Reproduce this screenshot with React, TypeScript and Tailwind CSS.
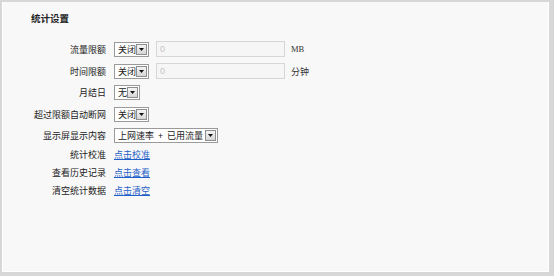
import React from 'react';

const FONT = { fontFamily: '"Noto Sans CJK SC", "Liberation Sans", sans-serif' };

function Select({ value, width }: { value: string; width: string }) {
  return (
    <div className={`flex h-[15px] items-center border border-[#9a9a9a] bg-white ${width}`}>
      <span className="flex-1 whitespace-pre pl-[3px] text-[9px] leading-none text-[#1a1a1a]">{value}</span>
      <span className="mr-[1px] flex h-[11px] w-[11px] items-center justify-center border border-[#8e8e8e] bg-gradient-to-b from-[#f4f4f4] to-[#d6d6d6]">
        <svg width="5" height="3" viewBox="0 0 5 3">
          <path d="M0 0h5L2.5 3z" fill="#111" />
        </svg>
      </span>
    </div>
  );
}

function DisabledInput() {
  return (
    <div className="flex h-[16px] w-[129px] items-center border border-[#d6d6d6] bg-[#f6f6f6] pl-[3px]">
      <span className="text-[9px] leading-none text-[#c4c4c4]" style={{ fontFamily: '"Liberation Sans", sans-serif' }}>
        0
      </span>
    </div>
  );
}

function Row({ label, height, children }: { label: string; height: string; children: React.ReactNode }) {
  return (
    <div className={`flex items-center ${height}`}>
      <div className="w-[103px] text-right text-[9px] leading-none text-[#222]">{label}</div>
      <div className="ml-[8px] flex items-center">{children}</div>
    </div>
  );
}

function LinkText({ text }: { text: string }) {
  return <a className="text-[9px] leading-none text-[#1f5fc8] underline underline-offset-1">{text}</a>;
}

export default function App() {
  return (
    <div className="h-[276px] w-[554px] bg-[#d7d7d7] pb-[4px] pl-[2px] pr-[5px] pt-[2px]" style={FONT}>
      <div className="h-full w-full border-b border-l border-r border-white bg-[#f8f8f8]">
        <div className="pl-[28px] pt-[11px] text-[9.5px] font-bold leading-[10px] text-[#222]">统计设置</div>
        <div className="mt-[15px] flex flex-col">
          <Row label="流量限额" height="h-[22px]">
            <Select value="关闭" width="w-[35px]" />
            <div className="ml-[7px]">
              <DisabledInput />
            </div>
            <span className="ml-[6px] text-[8.5px] leading-none text-[#333]" style={{ fontFamily: '"Liberation Serif", serif' }}>
              MB
            </span>
          </Row>
          <Row label="时间限额" height="h-[22px]">
            <Select value="关闭" width="w-[35px]" />
            <div className="ml-[7px]">
              <DisabledInput />
            </div>
            <span className="ml-[6px] text-[9px] leading-none text-[#333]">分钟</span>
          </Row>
          <Row label="月结日" height="h-[21px]">
            <Select value="无" width="w-[26px]" />
          </Row>
          <Row label="超过限额自动断网" height="h-[22px]">
            <Select value="关闭" width="w-[35px]" />
          </Row>
          <Row label="显示屏显示内容" height="h-[20px]">
            <Select value="上网速率  +  已用流量" width="w-[104px]" />
          </Row>
          <Row label="统计校准" height="h-[18px]">
            <LinkText text="点击校准" />
          </Row>
          <Row label="查看历史记录" height="h-[18px]">
            <LinkText text="点击查看" />
          </Row>
          <Row label="清空统计数据" height="h-[18px]">
            <LinkText text="点击清空" />
          </Row>
        </div>
      </div>
    </div>
  );
}
